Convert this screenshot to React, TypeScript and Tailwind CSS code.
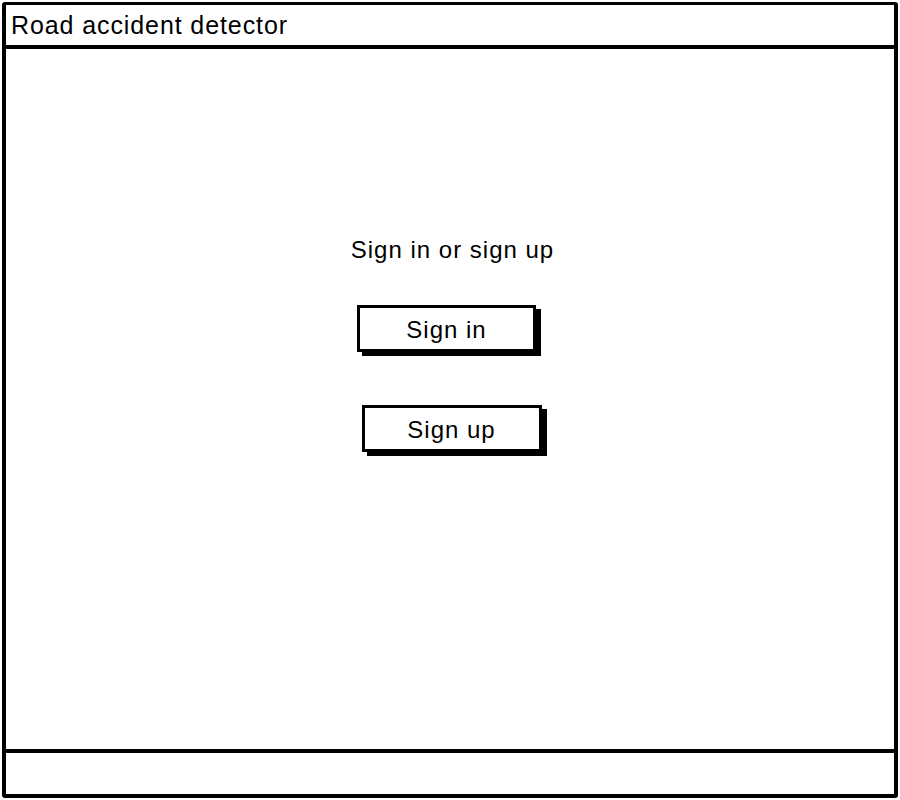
import React from "react";

export default function App() {
  const font = { fontFamily: '"Liberation Sans", Arial, sans-serif' };
  return (
    <div className="w-[900px] h-[800px] bg-white p-[2px]" style={font}>
      <div className="w-full h-full border-x-[4px] border-t-[3px] border-b-[4px] border-black flex flex-col rounded-[3px]">
        <div className="h-[44px] border-b-[4px] border-black flex items-center pl-[5px]">
          <span className="text-[25px] tracking-[0.9px] text-black leading-none">Road accident detector</span>
        </div>
        <div className="flex-1 flex flex-col items-center pt-[187px]">
          <div className="text-[24px] leading-[28px] tracking-[1px] text-black ml-[5px]">Sign in or sign up</div>
          <button className="mt-[41px] mr-[7px] w-[179px] h-[47px] pt-[2px] border-[3px] border-black bg-white flex items-center justify-center text-[24px] tracking-[1px] text-black shadow-[5px_4px_0_0_#000]">
            Sign in
          </button>
          <button className="mt-[53px] ml-[3px] w-[180px] h-[47px] pt-[2px] border-[3px] border-black bg-white flex items-center justify-center text-[24px] tracking-[1px] text-black shadow-[5px_4px_0_0_#000]">
            Sign up
          </button>
        </div>
        <div className="h-[45px] border-t-[4px] border-black"></div>
      </div>
    </div>
  );
}
